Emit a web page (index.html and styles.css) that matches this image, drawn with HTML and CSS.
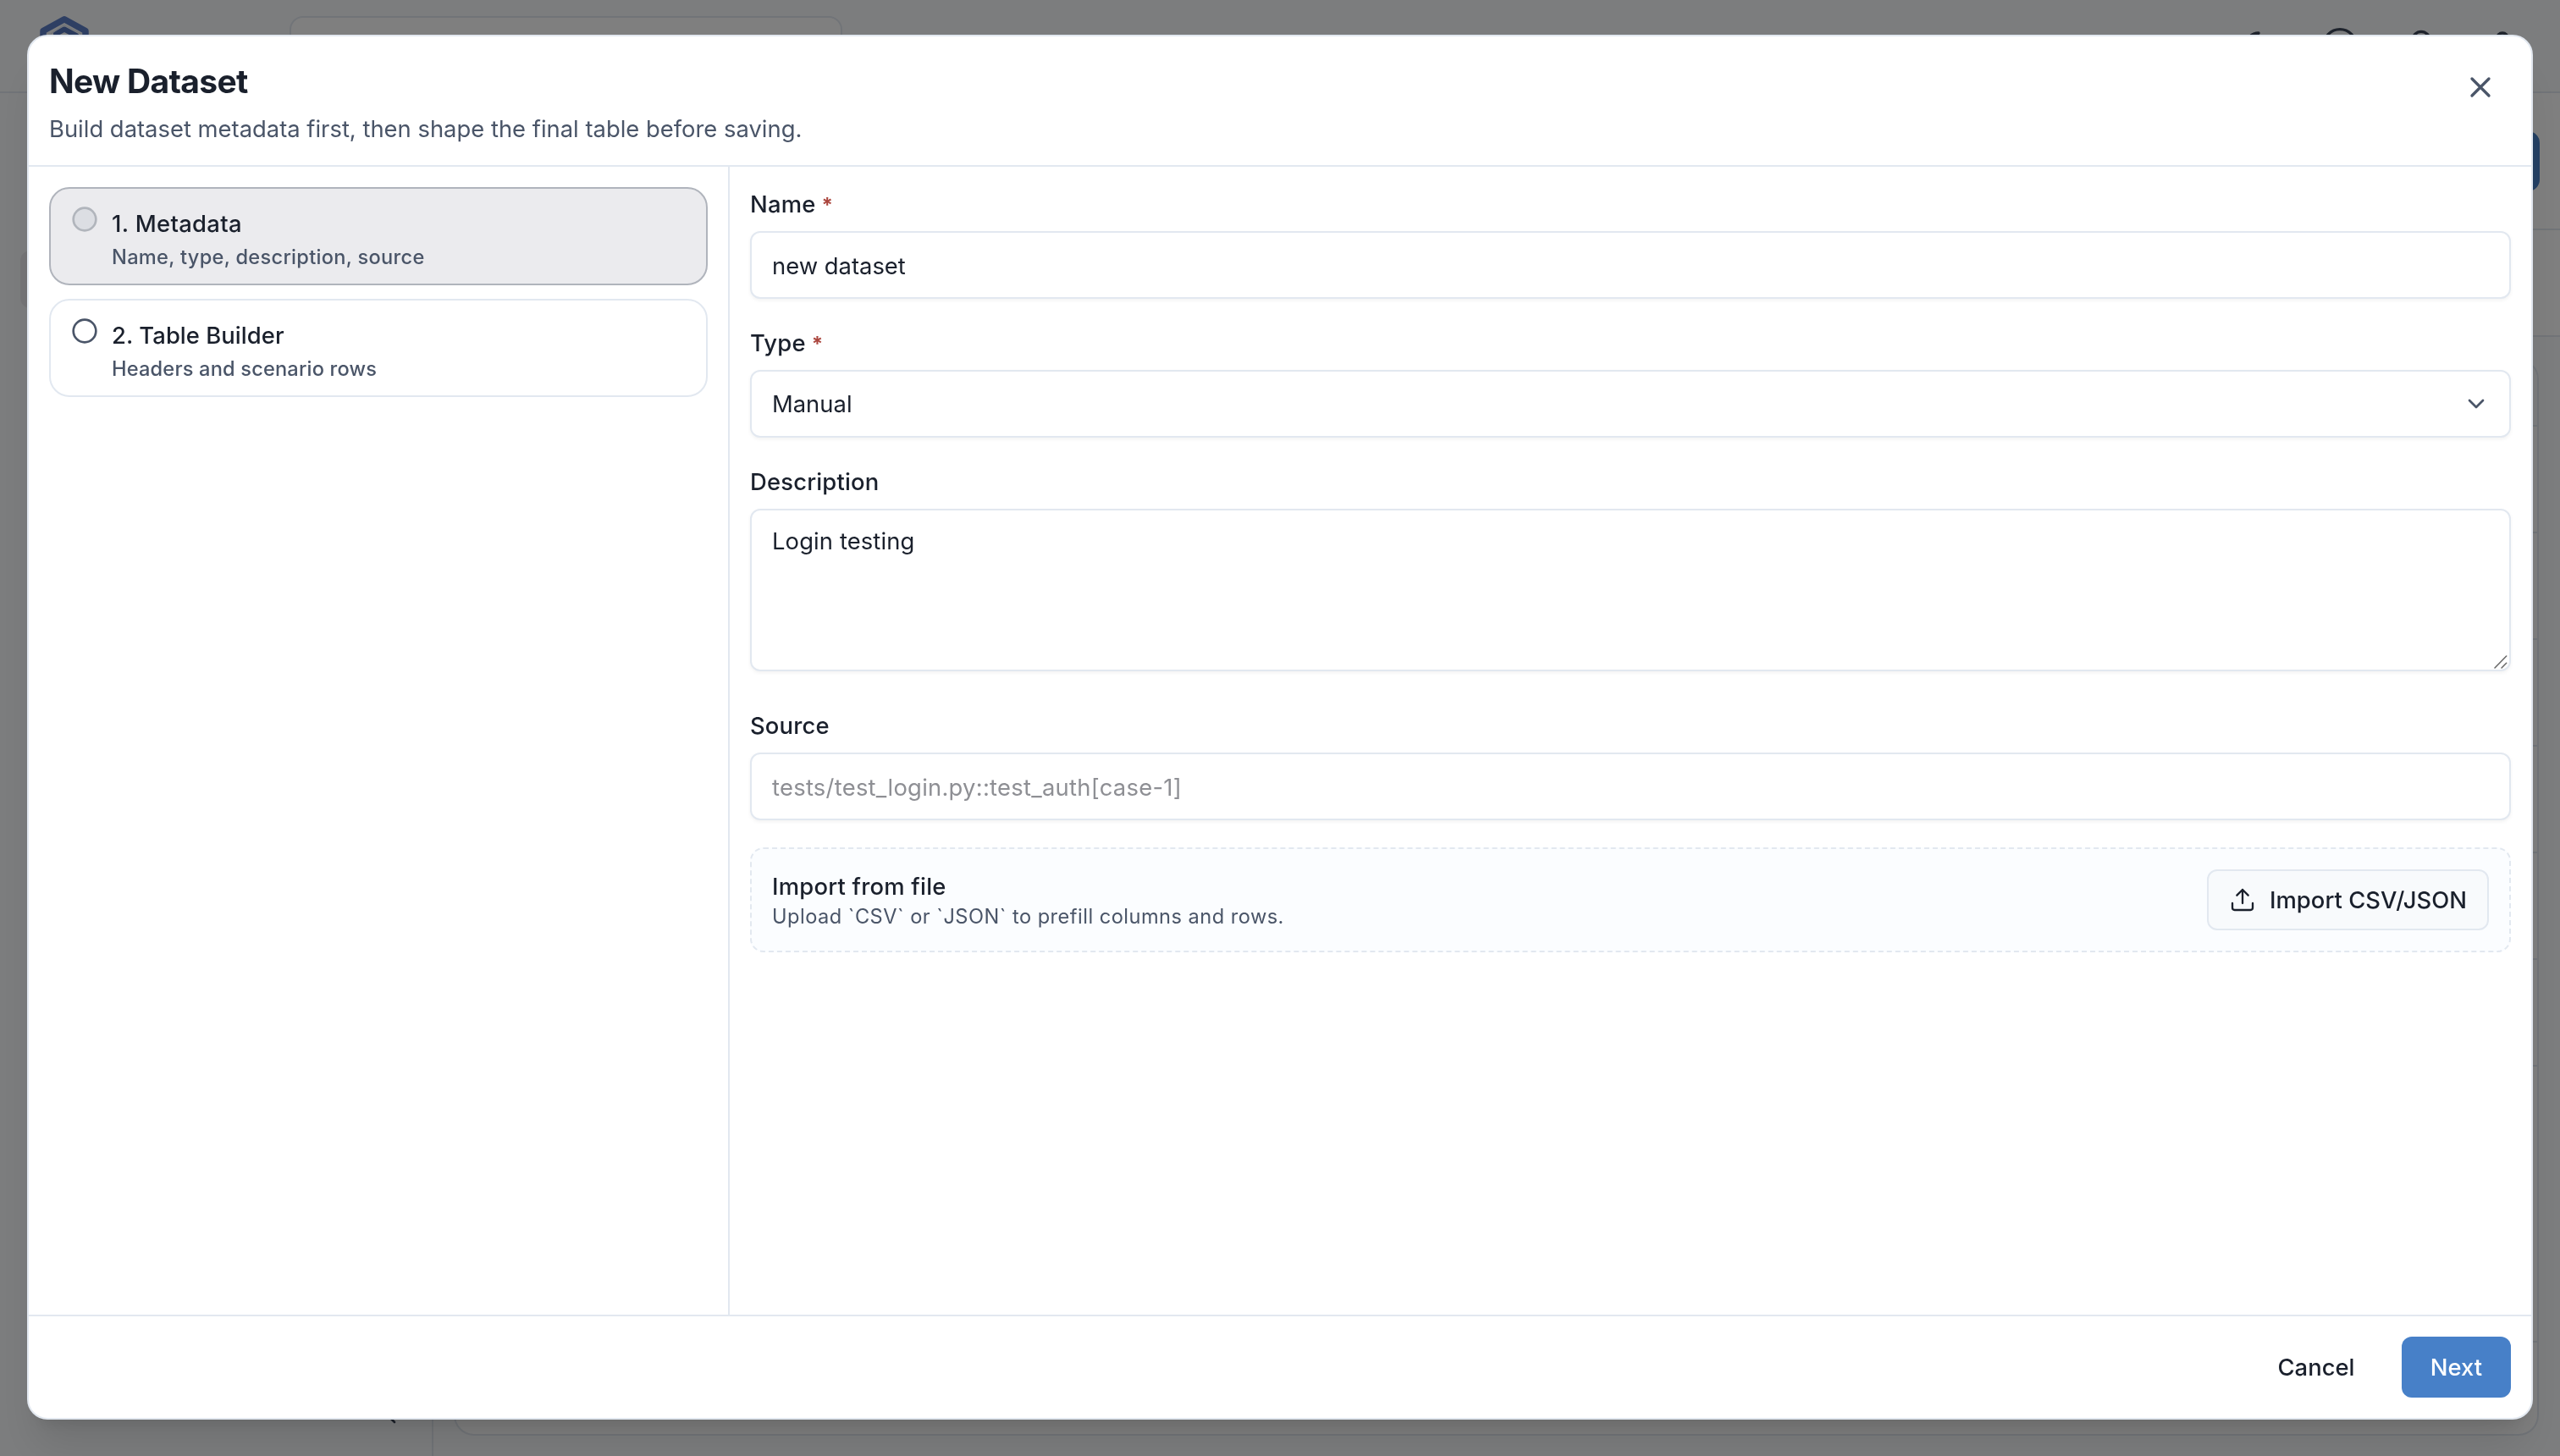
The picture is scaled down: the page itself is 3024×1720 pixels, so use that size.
FILE: index.html
```html
<!DOCTYPE html>
<html lang="en">
<head>
<meta charset="utf-8">
<title>New Dataset</title>
<link rel="stylesheet" href="styles.css">
</head>
<body>
<div class="app">
  <header class="topbar">
    <svg class="logo" viewBox="0 0 60 64" fill="none" stroke-linejoin="round" stroke-linecap="round">
      <path class="logo-ring" d="M30 5.8 55 19.5V45L30 59 5 45V19.5Z"/>
      <path class="logo-mark" d="M20 23 30 17.5 44 25"/>
      <path class="logo-line" d="M14 23 30 12.5 50 23"/>
    </svg>
    <div class="search"></div>
    <nav class="topbar-icons">
      <svg class="topbar-icon" viewBox="0 0 24 24"><path d="M12 3a6 6 0 0 0 9 9 9 9 0 1 1-9-9Z"/></svg>
      <svg class="topbar-icon" viewBox="0 0 24 24"><circle cx="12" cy="12" r="11.6"/></svg>
      <svg class="topbar-icon" viewBox="0 0 24 24"><path d="M6 8a6 6 0 0 1 12 0c0 7 3 9 3 9H3s3-2 3-9M10.3 21a2 2 0 0 0 3.4 0"/></svg>
      <svg class="topbar-icon" viewBox="0 0 24 24"><circle cx="12" cy="7" r="4"/><path d="M19 21v-2a4 4 0 0 0-4-4H9a4 4 0 0 0-4 4v2"/></svg>
    </nav>
  </header>
  <div class="workspace">
    <aside class="sidebar">
      <div class="sidebar-active"></div>
      <svg class="collapse" viewBox="0 0 24 24"><path d="m15 18-6-6 6-6"/></svg>
    </aside>
    <main class="page">
      <div class="page-head"><div class="page-action"></div></div>
      <div class="page-filters"></div>
      <div class="table">
        <div class="table-head"></div>
        <div class="table-row"></div>
        <div class="table-row"></div>
        <div class="table-row"></div>
        <div class="table-row"></div>
        <div class="table-row"></div>
        <div class="table-row"></div>
        <div class="table-rest"></div>
      </div>
    </main>
  </div>
</div>

<div class="overlay">
  <section class="dialog">
    <header class="dialog-head">
      <div>
        <h1 class="dialog-title">New Dataset</h1>
        <p class="dialog-subtitle">Build dataset metadata first, then shape the final table before saving.</p>
      </div>
      <button class="close" aria-label="Close"><svg viewBox="0 0 24 24"><path d="M18 6 6 18M6 6l12 12"/></svg></button>
    </header>

    <div class="dialog-body">
      <nav class="steps">
        <div class="step step-active">
          <svg class="step-icon" viewBox="0 0 24 24"><circle cx="12" cy="12" r="10"/></svg>
          <div class="step-text">
            <div class="step-title step-title-wide">1. Metadata</div>
            <div class="step-note step-note-wide">Name, type, description, source</div>
          </div>
        </div>
        <div class="step">
          <svg class="step-icon" viewBox="0 0 24 24"><circle cx="12" cy="12" r="10"/></svg>
          <div class="step-text">
            <div class="step-title">2. Table Builder</div>
            <div class="step-note">Headers and scenario rows</div>
          </div>
        </div>
      </nav>

      <form class="form">
        <div class="field">
          <label class="label" for="name">Name<span class="required">*</span></label>
          <input class="input" id="name" type="text" value="new dataset">
        </div>
        <div class="field">
          <label class="label">Type<span class="required">*</span></label>
          <div class="input select">
            <span>Manual</span>
            <svg class="chevron" viewBox="0 0 24 24"><path d="m6 9 6 6 6-6"/></svg>
          </div>
        </div>
        <div class="field field-area">
          <label class="label" for="description">Description</label>
          <div class="area-wrap">
            <textarea class="area" id="description">Login testing</textarea>
            <svg class="grip" viewBox="0 0 16 16"><path d="M1 15 14.7 1M9 15l5.7-5.7"/></svg>
          </div>
        </div>
        <div class="field field-last">
          <label class="label" for="source">Source</label>
          <input class="input input-source" id="source" type="text" placeholder="tests/test_login.py::test_auth[case-1]">
        </div>
        <div class="import">
          <div>
            <div class="import-title">Import from file</div>
            <div class="import-note">Upload `CSV` or `JSON` to prefill columns and rows.</div>
          </div>
          <button class="import-button" type="button">
            <svg viewBox="0 0 24 24"><path d="M21 15v4a2 2 0 0 1-2 2H5a2 2 0 0 1-2-2v-4M17 8l-5-5-5 5M12 3v12"/></svg>
            <span>Import CSV/JSON</span>
          </button>
        </div>
      </form>
    </div>

    <footer class="dialog-foot">
      <button class="button button-ghost">Cancel</button>
      <button class="button button-primary">Next</button>
    </footer>
  </section>
</div>
</body>
</html>
```
FILE: styles.css
```css
:root {
  --text: #1a202c;
  --muted: #4a5568;
  --line: #e2e8f0;
  --surface: #f8fafc;
  --primary: #4780c8;
}

* {
  box-sizing: border-box;
  margin: 0;
}

html,
body {
  height: 100%;
  overflow: hidden;
}

body {
  background: var(--surface);
  color: var(--text);
  font: 400 27.4px/40px Inter, "Liberation Sans", sans-serif;
}

button,
input,
textarea {
  font: inherit;
  color: inherit;
}

svg {
  display: block;
  flex: none;
  fill: none;
  stroke: currentColor;
  stroke-width: 2;
  stroke-linecap: round;
  stroke-linejoin: round;
}

/* Application behind the dialog */
.app {
  display: flex;
  flex-direction: column;
  height: 100%;
}

.topbar {
  display: flex;
  align-items: center;
  height: 110px;
  padding: 0 48px 0 46px;
  border-bottom: 2px solid var(--line);
}

.logo {
  width: 60px;
  height: 64px;
  margin-top: -10px;
}

.logo-ring {
  stroke: #5d7ec6;
  stroke-width: 7.5;
}

.logo-mark {
  stroke: #5574ba;
  stroke-width: 6;
}

.logo-line {
  stroke: #dfe6f3;
  stroke-width: 1.2;
}

.search {
  width: 653px;
  height: 70px;
  margin-left: 236px;
  border: 2px solid var(--line);
  border-radius: 16px;
  background: #fff;
}

.topbar-icons {
  display: flex;
  gap: 56px;
  margin-left: auto;
  color: #3c4659;
}

.topbar-icon {
  width: 40px;
  height: 40px;
  overflow: visible;
}

.workspace {
  display: flex;
  flex: 1;
}

.sidebar {
  display: flex;
  flex-direction: column;
  justify-content: space-between;
  width: 512px;
  padding: 186px 24px 32px;
  border-right: 2px solid var(--line);
}

.sidebar-active {
  height: 68px;
  border-radius: 12px;
  background: #ebebee;
}

.collapse {
  align-self: flex-end;
  width: 32px;
  height: 32px;
  margin-right: 8px;
  color: #3c4659;
}

.page {
  flex: 1;
}

.page-head {
  display: flex;
  align-items: center;
  justify-content: flex-end;
  height: 162px;
  padding-right: 24px;
  border-bottom: 2px solid var(--line);
  background: #fff;
}

.page-action {
  width: 240px;
  height: 71px;
  border-radius: 14px;
  background: var(--primary);
}

.page-filters {
  height: 126px;
  border-bottom: 2px solid var(--line);
  background: #fff;
}

.table {
  display: flex;
  flex-direction: column;
  height: 1272px;
  margin: 26px 25px 0 24px;
  border: 2px solid var(--line);
  border-radius: 24px;
  background: #fff;
  overflow: hidden;
}

.table-head {
  height: 78px;
  border-bottom: 2px solid var(--line);
  background: var(--surface);
}

.table-row {
  height: 126px;
  border-bottom: 2px solid var(--line);
}

.table-rest {
  height: 326px;
  border-bottom: 2px solid var(--line);
}

/* Dialog */
.overlay {
  position: fixed;
  inset: 0;
  padding: 41px 32px 43px;
  background: rgba(0, 0, 0, 0.5);
}

.dialog {
  display: flex;
  flex-direction: column;
  height: 100%;
  border: 2px solid var(--line);
  border-radius: 24px;
  background: #fff;
  box-shadow: 0 40px 50px -10px rgba(0, 0, 0, 0.1), 0 16px 20px -12px rgba(0, 0, 0, 0.1);
}

.dialog-head {
  display: flex;
  justify-content: space-between;
  height: 154px;
  padding: 32px 40px 0 24px;
  border-bottom: 2px solid var(--line);
}

.dialog-title {
  padding-top: 1px;
  font-size: 39px;
  font-weight: 700;
  line-height: 40px;
  letter-spacing: -0.68px;
}

.dialog-subtitle {
  margin-top: 16px;
  color: var(--muted);
  letter-spacing: 0;
}

.close {
  width: 40px;
  height: 40px;
  margin-top: 8px;
  padding: 0;
  border: 0;
  background: none;
  color: var(--muted);
}

.dialog-body {
  display: flex;
  flex: 1;
}

.steps {
  display: flex;
  flex-direction: column;
  gap: 16px;
  width: 828px;
  padding: 24px;
  border-right: 2px solid var(--line);
}

.step {
  display: flex;
  gap: 16px;
  height: 116px;
  padding: 20px 24px 15px;
  border: 2px solid var(--line);
  border-radius: 24px;
}

.step-active {
  border-color: #b0b4bc;
  background: #ebebee;
}

.step-icon {
  width: 32px;
  height: 32px;
  color: var(--muted);
}

.step-text {
  padding-top: 1px;
}

.step-active .step-icon {
  color: #b1b5bc;
  fill: #dcdee3;
}

.step-title {
  font-weight: 500;
  letter-spacing: 0.05px;
}

.step-title-wide {
  letter-spacing: 0.32px;
}

.step-note {
  margin-top: 4px;
  color: var(--muted);
  font-size: 23.6px;
  font-weight: 500;
  line-height: 32px;
  letter-spacing: 0.18px;
}

.step-note-wide {
  letter-spacing: 0.29px;
}

.form {
  flex: 1;
  padding: 30px 24px 0;
}

.field {
  margin-bottom: 38px;
}

.field-area {
  margin-bottom: 50px;
}

.field-last {
  margin-bottom: 32px;
}

.label {
  display: block;
  height: 28px;
  margin-bottom: 18px;
  font-weight: 500;
  line-height: 28px;
  letter-spacing: 0.18px;
}

.required {
  margin-left: 7px;
  color: #ab463e;
  font-size: 24px;
  font-weight: 700;
  line-height: 0;
}

.input,
.area {
  display: block;
  width: 100%;
  border: 2px solid var(--line);
  border-radius: 12px;
  outline: 0;
  background: #fff;
  box-shadow: 0 2px 4px rgba(0, 0, 0, 0.05);
  letter-spacing: 0;
}

.input {
  height: 80px;
  padding: 1px 24px 0;
}

.input-source {
  letter-spacing: 0.26px;
}

.input::placeholder {
  color: #8e8f94;
  opacity: 1;
}

.select {
  display: flex;
  align-items: center;
  justify-content: space-between;
  padding: 0 23px 0 24px;
}

.chevron {
  width: 32px;
  height: 32px;
  color: var(--muted);
}

.area-wrap {
  position: relative;
}

.area {
  height: 192px;
  padding: 16px 24px;
  resize: none;
  letter-spacing: 0.11px;
}

.grip {
  position: absolute;
  right: 4px;
  bottom: 3px;
  width: 16px;
  height: 16px;
  color: #666;
  stroke-width: 1.5;
}

.import {
  display: flex;
  justify-content: space-between;
  padding: 24px;
  border: 2px dashed var(--line);
  border-radius: 16px;
  background: #fbfdff;
}

.import-title {
  font-weight: 500;
  letter-spacing: 0.23px;
}

.import-note {
  color: var(--muted);
  font-size: 23.6px;
  line-height: 32px;
  letter-spacing: 0.48px;
}

.import-button {
  display: flex;
  align-items: center;
  gap: 16px;
  height: 72px;
  padding: 0 24px;
  border: 2px solid var(--line);
  border-radius: 12px;
  background: var(--surface);
  font-weight: 500;
  letter-spacing: 0.04px;
}

.import-button svg {
  width: 32px;
  height: 32px;
  stroke-width: 1.75;
}

.dialog-foot {
  display: flex;
  justify-content: flex-end;
  gap: 16px;
  padding: 24px;
  border-top: 2px solid var(--line);
}

.button {
  height: 72px;
  padding: 0;
  border: 0;
  border-radius: 12px;
  font-weight: 500;
  letter-spacing: 0;
}

.button-ghost {
  width: 170px;
  background: none;
}

.button-primary {
  width: 129px;
  background: var(--primary);
  color: #fff;
}
```
